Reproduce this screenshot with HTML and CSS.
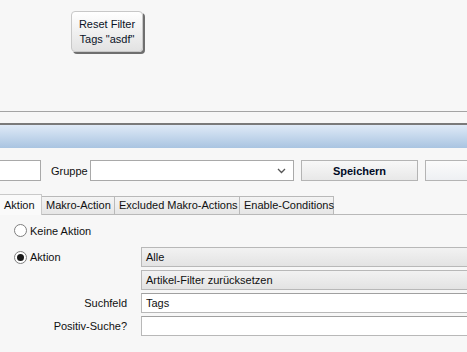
FILE: index.html
```html
<!DOCTYPE html>
<html lang="de">
<head>
    <meta charset="UTF-8">
    <title>Makro bearbeiten</title>
    <link rel="stylesheet" href="styles.css">
</head>
<body>

    <div class="canvas">
        <button class="reset-btn">Reset Filter<br>Tags "asdf"</button>
    </div>

    <div class="rule-light"></div>
    <div class="rule-dark"></div>
    <div class="title-bar"></div>

    <!-- Toolbar -->
    <div class="toolbar">
        <input type="text" class="name-input">
        <label class="toolbar-label">Gruppe</label>
        <div class="select">
            <svg class="chevron" width="9" height="6" viewBox="0 0 9 6">
                <path d="M1 1 L4.5 4.5 L8 1" fill="none" stroke="#555" stroke-width="1.3"/>
            </svg>
        </div>
        <button class="btn btn-save">Speichern</button>
        <button class="btn btn-extra"></button>
    </div>

    <!-- Tabs -->
    <div class="tabs">
        <div class="tab active">Aktion</div>
        <div class="tab">Makro-Action</div>
        <div class="tab">Excluded Makro-Actions</div>
        <div class="tab">Enable-Conditions</div>
    </div>

    <div class="form">
        <div class="radio-row full">
            <span class="radio"></span>Keine Aktion
        </div>

        <div class="radio-row">
            <span class="radio checked"></span>Aktion
        </div>
        <div class="combo">Alle</div>

        <div></div>
        <div class="combo">Artikel-Filter zurücksetzen</div>

        <div class="label">Suchfeld</div>
        <div class="field">Tags</div>

        <div class="label">Positiv-Suche?</div>
        <div class="field"></div>
    </div>

</body>
</html>
```

FILE: styles.css
```css
* {
    margin: 0;
    padding: 0;
    box-sizing: border-box;
}

body {
    font-family: 'Liberation Sans', Arial, sans-serif;
    font-size: 11px;
    color: #101010;
    background: #f7f7f7;
    width: 467px;
    height: 352px;
    overflow: hidden;
}

/* Top canvas with the filter button */
.canvas {
    height: 111px;
    padding: 11px 0 0 71px;
}

.reset-btn {
    width: 72px;
    height: 41px;
    font-family: inherit;
    font-size: 11px;
    line-height: 15px;
    color: #0a1226;
    border: 1px solid #c8c8c8;
    border-radius: 4px;
    background: linear-gradient(#ffffff, #e2e2e2);
    box-shadow: 2px 2px 0 #6f6f6f;
}

.rule-light {
    height: 12px;
    border-top: 1px solid #a4a4a4;
}

.rule-dark {
    height: 2px;
    background: #7a7a7a;
}

.title-bar {
    height: 23px;
    background: linear-gradient(#dfeaf7, #a9c4e1);
}

/* Toolbar row */
.toolbar {
    display: flex;
    align-items: center;
    margin-top: 12px;
    height: 21px;
    white-space: nowrap;
}

.name-input {
    width: 41px;
    height: 21px;
    flex-shrink: 0;
    border: 1px solid #a9a9a9;
    border-left: none;
    background: #fff;
}

.toolbar-label {
    display: block;
    flex-shrink: 0;
    margin-left: 10px;
    width: 39px;
}

.select {
    width: 204px;
    height: 21px;
    flex-shrink: 0;
    border: 1px solid #a9a9a9;
    background: #fff;
    display: flex;
    align-items: center;
    justify-content: flex-end;
    padding-right: 7px;
}

.btn {
    height: 21px;
    flex-shrink: 0;
    font-family: inherit;
    font-size: 11px;
    border: 1px solid #b4b4b4;
    background: linear-gradient(#f8f8f8, #e8e8e8);
    color: #000;
}

.btn-save {
    margin-left: 7px;
    width: 117px;
    font-weight: bold;
    color: #000a26;
}

.btn-extra {
    margin-left: 7px;
    width: 60px;
    background: linear-gradient(#fbfbfb, #eef0f3);
}

/* Tabs */
.tabs {
    display: flex;
    align-items: flex-end;
    margin-top: 13px;
    height: 21px;
    border-bottom: 1px solid #b9b9b9;
    white-space: nowrap;
}

.tab {
    flex-shrink: 0;
    height: 18px;
    line-height: 17px;
    padding: 0 4px;
    border: 1px solid #b9b9b9;
    border-bottom: none;
    border-left: none;
    background: linear-gradient(#f4f4f4, #e6e6e6);
}

.tab.active {
    width: 42px;
    height: 21px;
    line-height: 20px;
    padding-left: 4px;
    margin-bottom: -1px;
    background: #fafafa;
    border-color: #c9c9c9;
}

.tab:nth-child(2) { width: 73px; }
.tab:nth-child(3) { width: 125px; }
.tab:nth-child(4) { width: 94px; }

/* Form */
.form {
    display: grid;
    grid-template-columns: 141px 1fr;
    row-gap: 3px;
    padding-top: 8px;
}

.radio-row {
    display: flex;
    align-items: center;
    padding-left: 14px;
    height: 20px;
}

.radio-row.full {
    grid-column: 1 / 3;
    height: 15px;
    margin-bottom: 6px;
}

.radio {
    width: 13px;
    height: 13px;
    border: 1px solid #7f7f7f;
    border-radius: 50%;
    background: #fff;
    margin-right: 3px;
    display: flex;
    align-items: center;
    justify-content: center;
}

.radio.checked::after {
    content: "";
    width: 7px;
    height: 7px;
    border-radius: 50%;
    background: #1a1a1a;
}

.combo,
.field {
    height: 20px;
    line-height: 18px;
    padding-left: 4px;
    border: 1px solid #b8b8b8;
    border-right: none;
}

.combo {
    background: linear-gradient(#f2f2f2, #e3e3e3);
}

.field {
    background: #fff;
    border-top-color: #a0a0a0;
}

.label {
    text-align: right;
    padding-right: 14px;
    line-height: 20px;
}
```
